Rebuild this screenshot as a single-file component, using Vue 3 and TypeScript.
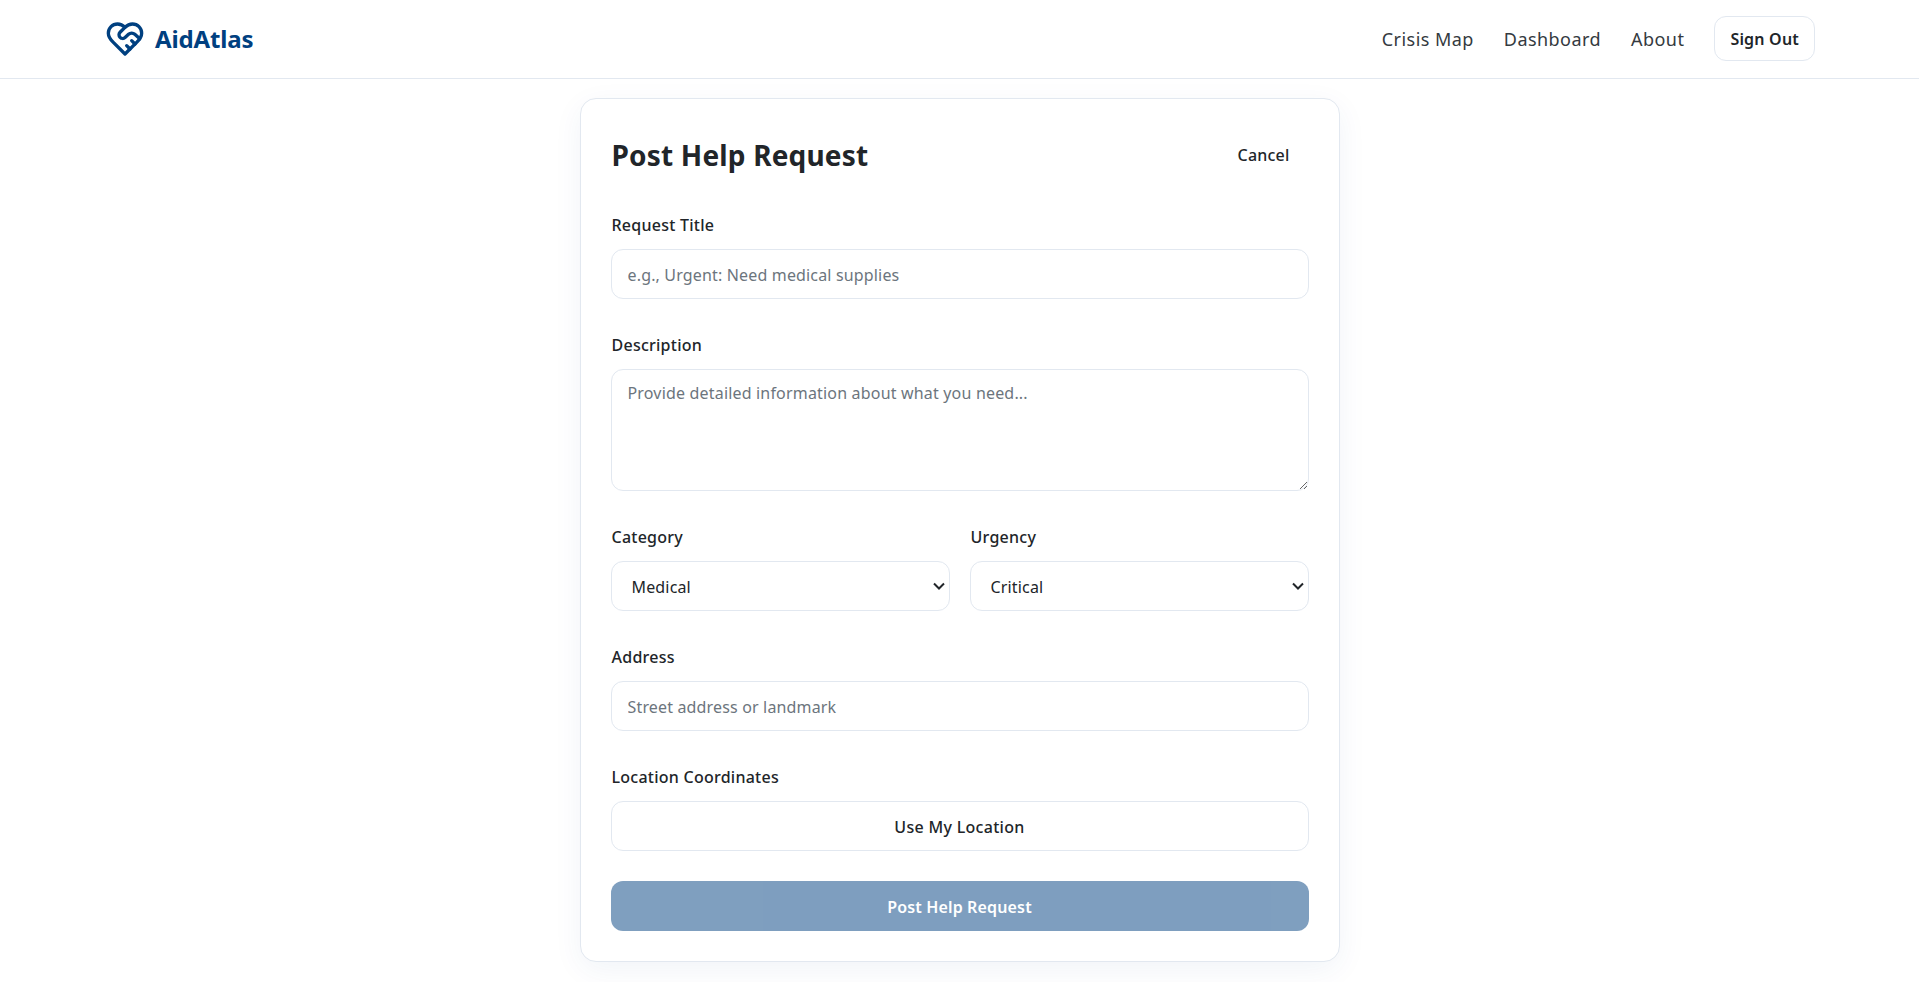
<script setup lang="ts">
import { ref } from "vue";

interface Option {
  value: string;
  label: string;
}

const navLinks = ["Crisis Map", "Dashboard", "About"];

const categories: Option[] = [
  { value: "medical", label: "Medical" },
  { value: "food", label: "Food" },
  { value: "shelter", label: "Shelter" },
];

const urgencies: Option[] = [
  { value: "critical", label: "Critical" },
  { value: "high", label: "High" },
  { value: "medium", label: "Medium" },
];

const category = ref("medical");
const urgency = ref("critical");
</script>

<template>
  <div class="page">
    <header class="navbar">
      <a class="brand" href="#">
        <svg class="brand-icon" viewBox="0 0 24 24" fill="none" stroke="currentColor" stroke-width="2" stroke-linecap="round" stroke-linejoin="round">
          <path d="M19 14c1.49-1.46 3-3.21 3-5.5A5.5 5.5 0 0 0 16.5 3c-1.76 0-3 .5-4.5 2-1.5-1.5-2.74-2-4.5-2A5.5 5.5 0 0 0 2 8.5c0 2.3 1.5 4.05 3 5.5l7 7Z" />
          <path d="M12 5 9.04 7.96a2.17 2.17 0 0 0 0 3.08c.82.82 2.13.85 3 .07l2.07-1.9a2.82 2.82 0 0 1 3.79 0l2.96 2.66" />
          <path d="m18 15-2-2" />
          <path d="m15 18-2-2" />
        </svg>
        <span>AidAtlas</span>
      </a>
      <nav class="nav-links">
        <a v-for="link in navLinks" :key="link" href="#">{{ link }}</a>
        <button class="sign-out" type="button">Sign Out</button>
      </nav>
    </header>

    <main class="content">
      <section class="card">
        <div class="card-head">
          <h1>Post Help Request</h1>
          <button class="cancel" type="button">Cancel</button>
        </div>

        <form class="form" @submit.prevent>
          <label class="field">
            <span>Request Title</span>
            <input type="text" placeholder="e.g., Urgent: Need medical supplies" />
          </label>

          <label class="field">
            <span>Description</span>
            <textarea placeholder="Provide detailed information about what you need..."></textarea>
          </label>

          <div class="row">
            <label class="field">
              <span>Category</span>
              <select v-model="category">
                <option v-for="o in categories" :key="o.value" :value="o.value">{{ o.label }}</option>
              </select>
            </label>
            <label class="field">
              <span>Urgency</span>
              <select v-model="urgency">
                <option v-for="o in urgencies" :key="o.value" :value="o.value">{{ o.label }}</option>
              </select>
            </label>
          </div>

          <label class="field">
            <span>Address</span>
            <input type="text" placeholder="Street address or landmark" />
          </label>

          <div class="field">
            <span>Location Coordinates</span>
            <button class="locate" type="button">Use My Location</button>
          </div>

          <button class="submit" type="submit" disabled>Post Help Request</button>
        </form>
      </section>
    </main>
  </div>
</template>

<style scoped>
.page {
  min-height: 982px;
  background: #fff;
  color: #212529;
  font-family: "Noto Sans", "Open Sans", sans-serif;
  font-size: 16px;
}

.navbar {
  box-sizing: border-box;
  height: 79px;
  padding: 0 104px 1px 105px;
  border-bottom: 1px solid #e2e8f0;
  display: flex;
  justify-content: space-between;
  align-items: center;
}

.brand {
  display: flex;
  align-items: center;
  gap: 10px;
  color: #004080;
  font-size: 24px;
  font-weight: 700;
  letter-spacing: -0.15px;
  text-decoration: none;
}

.brand-icon {
  width: 40px;
  height: 40px;
}

.nav-links {
  display: flex;
  align-items: center;
  gap: 30px;
}

.nav-links a {
  color: #343a40;
  font-size: 18px;
  letter-spacing: 0.45px;
  text-decoration: none;
}

button {
  font-family: inherit;
  font-size: 16px;
  font-weight: 600;
  color: #212529;
  cursor: pointer;
}

.sign-out {
  height: 45px;
  padding: 0 15px;
  background: #fff;
  border: 1px solid #e2e8f0;
  border-radius: 12px;
  letter-spacing: 0.2px;
}

.content {
  display: flex;
  justify-content: center;
  padding-top: 19px;
}

.card {
  width: 760px;
  box-sizing: border-box;
  padding: 30px;
  background: #fff;
  border: 1px solid #e2e8f0;
  border-radius: 16px;
  box-shadow: 0 8px 30px rgba(0, 64, 128, 0.06);
}

.card-head {
  height: 52px;
  margin-bottom: 34px;
  display: flex;
  justify-content: space-between;
  align-items: center;
}

h1 {
  margin: 0;
  padding-left: 1px;
  font-size: 28px;
  font-weight: 700;
  letter-spacing: 0.18px;
}

.cancel {
  height: 50px;
  padding: 0 19px 0 20px;
  background: transparent;
  border: none;
  font-weight: 500;
  letter-spacing: 0.2px;
}

.form {
  display: flex;
  flex-direction: column;
  gap: 36px;
}

.row {
  display: grid;
  grid-template-columns: 1fr 1fr;
  gap: 20px;
}

.field {
  display: flex;
  flex-direction: column;
  gap: 12px;
}

.field > span {
  height: 22px;
  padding-left: 1px;
  line-height: 20px;
  font-size: 16px;
  font-weight: 500;
  letter-spacing: 0.25px;
}

input,
select,
textarea,
.locate {
  box-sizing: border-box;
  width: 100%;
  background: #fff;
  border: 1px solid #e2e8f0;
  border-radius: 12px;
  font-family: inherit;
  font-size: 16px;
  color: #212529;
}

input,
select {
  height: 50px;
  padding: 2px 15px 0 16px;
  letter-spacing: 0.16px;
}

select {
  padding-left: 20px;
  appearance: none;
  background-image: url("data:image/svg+xml,%3Csvg xmlns='http://www.w3.org/2000/svg' width='12' height='8' fill='none' stroke='%23212529' stroke-width='2'%3E%3Cpath d='M1 1.5l5 5 5-5'/%3E%3C/svg%3E");
  background-repeat: no-repeat;
  background-position: right 4px center;
}

textarea {
  display: block;
  height: 122px;
  padding: 12px 15px 12px 16px;
  resize: vertical;
  letter-spacing: 0.18px;
}

input::placeholder,
textarea::placeholder {
  color: #6c757d;
}

.locate {
  height: 50px;
  padding-top: 2px;
  font-weight: 500;
  letter-spacing: 0.3px;
}

.submit {
  height: 50px;
  margin-top: -6px;
  padding-top: 2px;
  background: #004080;
  color: #fff;
  border: none;
  border-radius: 12px;
  opacity: 0.5;
  letter-spacing: 0.15px;
  cursor: not-allowed;
}
</style>
